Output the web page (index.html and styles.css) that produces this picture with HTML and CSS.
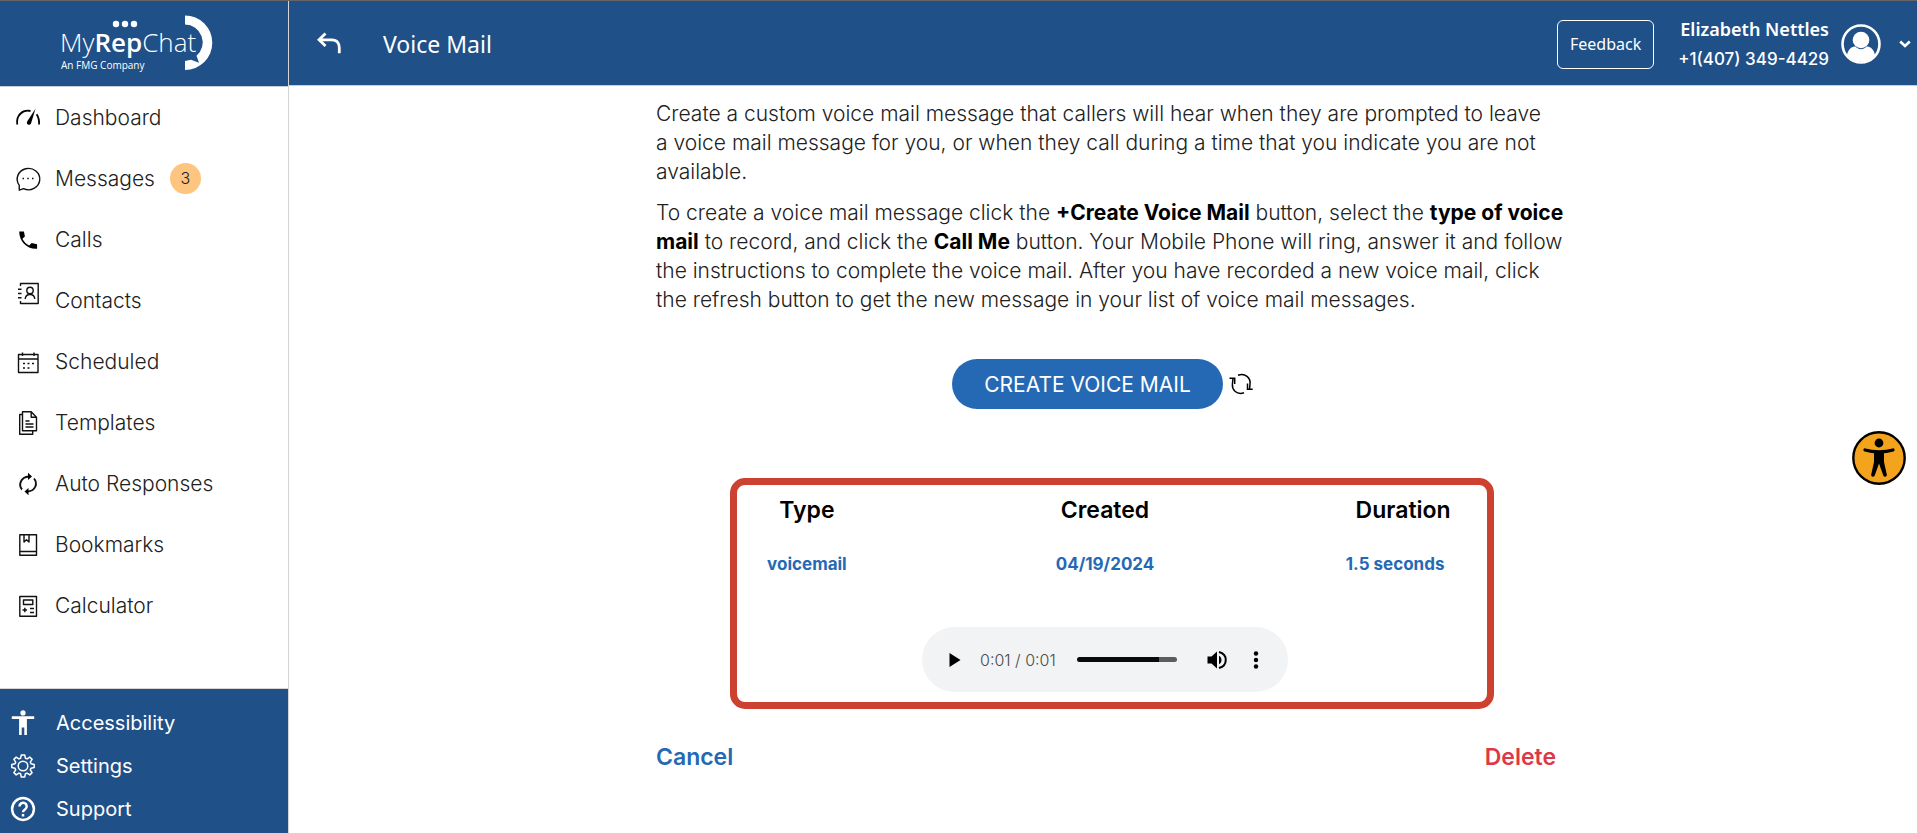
FILE: index.html
```html
<!DOCTYPE html>
<html lang="en">
<head>
<meta charset="utf-8">
<meta name="viewport" content="width=device-width, initial-scale=1">
<title>Voice Mail</title>
<link rel="stylesheet" href="styles.css">
</head>
<body>
<div class="app">
  <aside class="sidebar">
    <div class="brand">
      <svg class="logo" viewBox="0 0 154 58" role="img" aria-label="MyRepChat">
        <text class="logo-name" x="0" y="37">My<tspan class="logo-strong">Rep</tspan>Chat</text>
        <text class="logo-sub" x="1" y="54">An FMG Company</text>
        <g fill="#fff">
          <circle cx="56" cy="9" r="3.200"/><circle cx="65" cy="9" r="3.200"/><circle cx="74" cy="9" r="3.200"/>
          <path d="M125 .5A27.300 27.300 0 0 1 125 55.100V46l6-1.200 8 3-2.500-7A17.800 17.800 0 0 0 125 9.500Z"/>
        </g>
      </svg>
    </div>
    <nav class="nav">
      <a class="nav-item" href="#dashboard">
        <svg class="icon" viewBox="0 0 24 24"><path d="M1.300 18.500C-.2 9.500 6.500 3.300 14.500 5" fill="none" stroke="#000" stroke-width="1.800"/><path d="M19.500 2.800 11.300 15.200c-1.700 3 2.200 4.800 3.700 2.200Z" /><path d="M20.600 8.300c2 3 2.800 6.200 2.400 10.200" fill="none" stroke="#000" stroke-width="1.800"/></svg>
        <span>Dashboard</span>
      </a>
      <a class="nav-item" href="#messages">
        <svg class="icon line" viewBox="0 0 24 24"><path d="M3.200 18.200A11.300 10.700 0 1 1 7.500 21.700L3.300 23.200Z"/><path d="M6.500 11.500h1.500M11.300 11.500h1.500M16 11.500h1.500" stroke-width="1.600"/></svg>
        <span>Messages</span><span class="badge">3</span>
      </a>
      <a class="nav-item" href="#calls">
        <svg class="icon" viewBox="0 0 24 24"><path d="M3.200 3.500h4.700l1 5-2.500 2.300c1.500 3 3.700 5.200 6.800 6.800l2.400-2.600 5.500 1.200v4.600C11.300 21.700 3.200 13.500 3.200 3.500Z"/></svg>
        <span>Calls</span>
      </a>
      <a class="nav-item" href="#contacts">
        <svg class="icon line raised" viewBox="0 0 24 24"><path d="M4.500 5V2.500h17.700v20H4.500V20M2 8.300h3.500M2 12.500h3.500M2 16.700h3.500"/><circle cx="14" cy="9.500" r="3.200"/><path d="M9.200 18c.4-6 9.200-6 9.600 0"/></svg>
        <span>Contacts</span>
      </a>
      <a class="nav-item" href="#scheduled">
        <svg class="icon line" viewBox="0 0 24 24"><path d="M2.500 4.500h19.500v18H2.500ZM2.500 9h19.500M6.500 2.500V6M18 2.500V6"/><path d="M7 13.500h2M11.500 13.500h2M16 13.500h2M7 18h2M11.500 18h2" stroke-width="1.600"/></svg>
        <span>Scheduled</span>
      </a>
      <a class="nav-item" href="#templates">
        <svg class="icon line" viewBox="0 0 24 24"><path d="M6.500.8h8.700l5.300 5.400v13.500h-14ZM15.200.8v5.400h5.300M6.500 3.500H3.700v19.700h13v-3.500M9.500 10h4M9.500 13h8M9.500 16h8" /></svg>
        <span>Templates</span>
      </a>
      <a class="nav-item" href="#auto-responses">
        <svg class="icon line" viewBox="0 0 24 24"><path d="M6 17.500C2.500 13.500 4 5 13 4.500M18 6.500c3.800 4.500 2 12.500-6.500 13" stroke-width="1.900"/><path d="M12 .8 16 4.500 12 8ZM12.500 16l-4 3.600 4 3.600Z" fill="#000" stroke="none"/></svg>
        <span>Auto Responses</span>
      </a>
      <a class="nav-item" href="#bookmarks">
        <svg class="icon line" viewBox="0 0 24 24"><path d="M3.800 1.800h16.700v20.400H3.800ZM3.800 18.500h16.700M8 1.800v7.200l2.500-2.300L13 9V1.800"/></svg>
        <span>Bookmarks</span>
      </a>
      <a class="nav-item" href="#calculator">
        <svg class="icon line" viewBox="0 0 24 24"><path d="M3.800 2.500h16.700v19.800H3.800ZM7.500 6h9.300v4.500H7.500ZM6.500 16h4.500M8.800 13.800v4.500M14 14.500h4M14 18.500h4"/></svg>
        <span>Calculator</span>
      </a>
    </nav>
    <nav class="nav-foot">
      <a class="foot-item" href="#accessibility">
        <svg class="icon" viewBox="0 0 24 24" fill="#fff"><circle cx="12" cy="1.900" r="2.600"/><path d="M.8 5.300h22.400v2.600h-7.300V24h-2.600v-7.500h-2.600V24H8.100V7.900H.8Z"/></svg>
        <span>Accessibility</span>
      </a>
      <a class="foot-item" href="#settings">
        <svg class="icon" viewBox="0 0 24 24" fill="none" stroke="#fff" stroke-width="1.500" stroke-linejoin="round"><circle cx="12" cy="12" r="4.800"/><path d="M10.300 1h3.400l.7 3.200 1.700.7 2.700-1.800 2.300 2.300-1.800 2.700.7 1.700 3.200.7v3l-3.200.7-.7 1.700 1.800 2.700-2.300 2.300-2.700-1.800-1.700.7-.7 3.200h-3.400l-.7-3.200-1.700-.7-2.700 1.800-2.300-2.300 1.800-2.700-.7-1.700L.8 13.500v-3L4 9.800l.7-1.700-1.800-2.700 2.300-2.300 2.700 1.800 1.700-.7Z"/></svg>
        <span>Settings</span>
      </a>
      <a class="foot-item" href="#support">
        <svg class="icon" viewBox="0 0 24 24" fill="none" stroke="#fff" stroke-width="2.500"><circle cx="12" cy="12" r="10.900"/><path d="M8.500 9.500a3.600 3.600 0 1 1 5.700 2.800c-1.500 1-2.200 1.500-2.200 3M12 17v2.400"/></svg>
        <span>Support</span>
      </a>
    </nav>
  </aside>

  <div class="page">
    <header class="topbar">
      <button class="back" type="button" aria-label="Back">
        <svg viewBox="0 0 24 24" fill="none" stroke="#fff" stroke-width="2.800"><path d="M8.500 1.500 2 7.800l6.500 6.200M2 7.800H15c5 0 7.300 3.500 7.300 8v5.500"/></svg>
      </button>
      <h1 class="title">Voice Mail</h1>
      <button class="feedback" type="button">Feedback</button>
      <div class="user">
        <span class="user-name">Elizabeth Nettles</span>
        <span class="user-phone">+1(407) 349-4429</span>
      </div>
      <button class="account" type="button" aria-label="Account menu">
        <svg class="avatar" viewBox="0 0 40 40"><circle cx="20" cy="20" r="18.500" fill="none" stroke="#fff" stroke-width="2.600"/><path d="M6 31C7 25 11 22.500 14.500 22.500c3.200 3.600 7.800 3.600 11 0 3.500 0 7.500 2.500 8.500 8.500A18 18 0 0 1 6 31Z" fill="#fff"/><circle cx="20" cy="16" r="8.300" fill="#fff"/></svg>
        <svg class="chevron" viewBox="0 0 12 8"><path d="M1.200 1.500 6 6l4.800-4.500" fill="none" stroke="#fff" stroke-width="2.600"/></svg>
      </button>
    </header>

    <main class="content">
      <p class="intro">Create a custom voice mail message that callers will hear when they are prompted to leave<br>a voice mail message for you, or when they call during a time that you indicate you are not<br>available.</p>
      <p class="intro">To create a voice mail message click the <b>+Create Voice Mail</b> button, select the <b>type of voice<br>mail</b> to record, and click the <b>Call Me</b> button. Your Mobile Phone will ring, answer it and follow<br>the instructions to complete the voice mail. After you have recorded a new voice mail, click<br>the refresh button to get the new message in your list of voice mail messages.</p>

      <div class="create-row">
        <button class="create" type="button">CREATE VOICE MAIL</button>
        <button class="refresh" type="button" aria-label="Refresh">
          <svg viewBox="0 0 24 24" fill="none" stroke="#000" stroke-width="1.500"><path d="M9 3.200c7-2.500 13 2.300 12 9.300l-.5 4.500M15 20.800C8 23 2.500 18.500 3.500 11l.5-4.500"/><path d="M.5 6.200h5.200V12M23.700 17.300h-5.200V11.500"/></svg>
        </button>
      </div>

      <section class="panel">
        <table class="messages">
          <thead><tr><th class="col-side">Type</th><th>Created</th><th class="col-side">Duration</th></tr></thead>
          <tbody><tr><td>voicemail</td><td>04/19/2024</td><td class="cell-duration">1.5 seconds</td></tr></tbody>
        </table>
        <div class="player">
          <button type="button" class="play" aria-label="Play"><svg viewBox="0 0 12 14"><path d="M.5 0 11.500 7 .5 14Z"/></svg></button>
          <span class="time">0:01 / 0:01</span>
          <input class="seek" type="range" min="0" max="100" value="82" aria-label="Seek">
          <button type="button" class="volume" aria-label="Mute"><svg viewBox="0 0 20 20"><path d="M.5 6.500h4L10 1.500v17l-5.500-5h-4Z"/><path d="M12 5.700c3.300 1.500 3.300 7.100 0 8.600Z"/><path d="M12 2c9 2.300 9 13.700 0 16" fill="none" stroke="#000" stroke-width="2"/></svg></button>
          <button type="button" class="more" aria-label="More options"><svg viewBox="0 0 6 18"><circle cx="3" cy="2.500" r="2.200"/><circle cx="3" cy="9" r="2.200"/><circle cx="3" cy="15.500" r="2.200"/></svg></button>
        </div>
      </section>

      <div class="actions">
        <button class="link cancel" type="button">Cancel</button>
        <button class="link delete" type="button">Delete</button>
      </div>
    </main>
  </div>
</div>

<button class="a11y" type="button" aria-label="Accessibility options">
  <svg viewBox="0 0 54 54"><circle cx="27" cy="27" r="25.700" fill="#f4a31d" stroke="#000" stroke-width="2.400"/><circle cx="27" cy="12" r="4.400"/><path d="M13 19c4.500 1.300 9 1.800 14 1.800S36.500 20.300 41 19" fill="none" stroke="#000" stroke-width="3.200" stroke-linecap="round"/><path d="M22 20h10v11l2.800 12.500a1.800 1.800 0 0 1-3.600.8L27 32.500l-4.200 11.800a1.800 1.800 0 0 1-3.600-.8L22 31Z"/></svg>
</button>
</body>
</html>
```

FILE: styles.css
```css
* { box-sizing: border-box; }

body {
  margin: 0;
  background: #fff;
  color: #212121;
  font-family: Inter, "Liberation Sans", sans-serif;
  font-size: 21px;
}

button {
  padding: 0;
  border: 0;
  background: none;
  color: inherit;
  font: inherit;
  cursor: pointer;
}

svg { display: block; }

.app {
  display: flex;
  min-height: 100vh;
  border-top: 1px solid #666;
}

/* Sidebar */
.sidebar {
  display: flex;
  flex-direction: column;
  flex: none;
  width: 289px;
  border-right: 1px solid #d5d5d5;
}

.brand {
  height: 86px;
  padding: 14px 0 0 60px;
  background: #205088;
  border-bottom: 1px solid #c4cfdc;
}

.logo { width: 154px; height: 58px; overflow: visible; fill: #fff; }
.logo-name { font: 300 26px "Open Sans", sans-serif; }
.logo-strong { font-weight: 600; }
.logo-sub { font: 400 10px "Open Sans", sans-serif; }

.nav { display: flex; flex-direction: column; }

.nav-item {
  display: flex;
  align-items: center;
  gap: 15px;
  height: 61px;
  padding-left: 16px;
  color: #212121;
  font-weight: 300;
  text-decoration: none;
}

.icon { flex: none; width: 24px; height: 24px; overflow: visible; }
.line { fill: none; stroke: #111; stroke-width: 1.4px; stroke-linejoin: round; }
.raised { align-self: flex-start; margin-top: 11px; }

.badge {
  width: 31px;
  border-radius: 50%;
  background: #fdc57f;
  font-size: 16px;
  line-height: 31px;
  text-align: center;
}

.nav-foot {
  margin-top: auto;
  padding: 12px 0 3px;
  background: #205088;
  border-top: 1px solid #d5d5d5;
}

.foot-item {
  display: flex;
  align-items: center;
  gap: 21px;
  height: 43px;
  padding-left: 11px;
  color: #fff;
  font-size: 20px;
  text-decoration: none;
}

/* Top bar */
.page { flex: 1; min-width: 0; }

.topbar {
  display: flex;
  align-items: center;
  height: 85px;
  padding: 2px 6px 0 28px;
  background: #205088;
  border-bottom: 1px solid #c4cfdc;
  color: #fff;
  font-family: "Noto Sans", "Open Sans", sans-serif;
}

.back svg { width: 24px; height: 24px; }

.title {
  margin: 0 auto 0 42px;
  font-size: 23px;
  font-weight: 400;
}

.feedback {
  width: 97px;
  height: 49px;
  margin-right: 24px;
  border: 1px solid #fff;
  border-radius: 6px;
  font-size: 16px;
}

.user {
  display: flex;
  flex-direction: column;
  gap: 6px;
  margin-right: 12px;
  font-size: 17px;
  line-height: 24px;
  text-align: right;
}

.user-name { font-size: 18px; font-weight: 600; }
.user-phone { font-family: Inter, sans-serif; font-weight: 500; }

.account { display: flex; align-items: center; gap: 18px; }
.avatar { width: 40px; height: 40px; }
.chevron { width: 12px; height: 8px; }

/* Content */
.content {
  width: 906px;
  max-width: 100%;
  margin: 0 auto;
  padding: 13px 0 24px 6px;
}

.intro {
  margin: 0 0 12px;
  font-weight: 300;
  line-height: 29px;
  white-space: nowrap;
}

.intro b { color: #000; font-weight: 700; }

.create-row {
  display: flex;
  align-items: center;
  gap: 6px;
  margin: 45px 0 69px 296px;
}

.create {
  width: 271px;
  height: 50px;
  border-radius: 25px;
  background: #2569b5;
  color: #fff;
}

.refresh svg { width: 24px; height: 24px; }

.panel {
  width: 764px;
  margin-left: 74px;
  padding: 4px 14px 10px 0;
  border: 7px solid #cc4130;
  border-radius: 15px;
}

.messages {
  width: 100%;
  border-collapse: collapse;
  table-layout: fixed;
  text-align: center;
}

.messages th { height: 42px; padding: 0; color: #000; font-size: 23px; font-weight: 600; }
.messages td { height: 66px; padding: 0; color: #2569b5; font-size: 17px; font-weight: 700; }
.messages .col-side { width: 19%; }
.messages .cell-duration { padding-right: 16px; }

.player {
  display: flex;
  align-items: center;
  width: 366px;
  height: 65px;
  margin: 30px auto 0;
  padding: 0 29px 0 27px;
  border-radius: 33px;
  background: #f1f3f4;
}

.play svg { width: 12px; height: 14px; }
.time { margin-left: 19px; color: #4a4a4a; font-size: 16px; font-weight: 300; }

.seek {
  flex: none;
  width: 100px;
  height: 5px;
  margin: 0 30px 0 auto;
  border-radius: 3px;
  background: linear-gradient(to right, #0a0a0a 82%, #5c5c5c 82%);
  appearance: none;
}

.seek::-webkit-slider-thumb { width: 1px; height: 1px; opacity: 0; appearance: none; }

.volume svg { width: 20px; height: 20px; }
.more { margin-left: 26px; }
.more svg { width: 6px; height: 18px; }

.actions {
  display: flex;
  justify-content: space-between;
  margin-top: 32px;
}

.link { font-size: 23px; font-weight: 600; line-height: 32px; }
.cancel { color: #2569b5; }
.delete { color: #df3648; }

/* Floating accessibility button */
.a11y { position: fixed; right: 11px; top: 431px; }
.a11y svg { width: 54px; height: 54px; }
```
